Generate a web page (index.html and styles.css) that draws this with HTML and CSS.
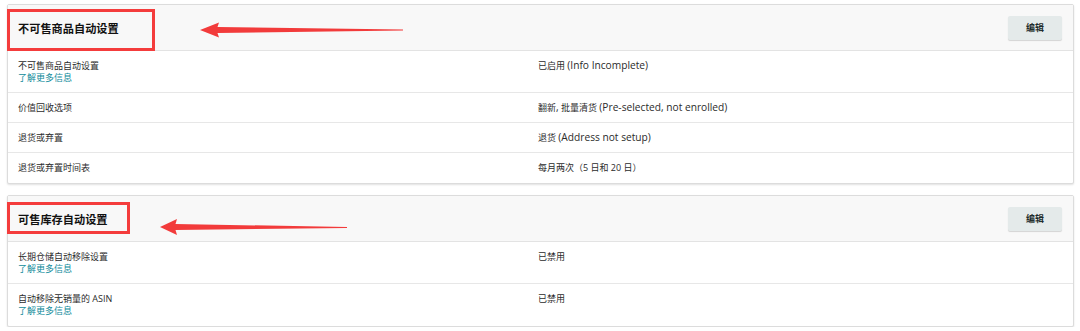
FILE: index.html
```html
<!DOCTYPE html>
<html lang="zh-CN">
<head>
<meta charset="utf-8">
<title>自动设置</title>
<link rel="stylesheet" href="styles.css">
</head>
<body>
<div class="page">
  <section class="card">
    <div class="card-head">
      <h2 class="title">不可售商品自动设置</h2>
      <button class="btn">编辑</button>
      <div class="mark mark-1"></div>
      <svg class="arrow arrow-1" width="210" height="18" viewBox="0 0 210 18"><path d="M2,9 L21,1.5 L19.5,6 L205,8.5 L205,9.5 L19.5,12 L21,16.5 Z" fill="#f23b3b"/></svg>
    </div>
    <div class="row tall">
      <div class="label">不可售商品自动设置<a class="link">了解更多信息</a></div>
      <div class="value">已启用 <span class="en">(Info Incomplete)</span></div>
    </div>
    <div class="row">
      <div class="label">价值回收选项</div>
      <div class="value">翻新<span class="en">,</span> 批量清货 <span class="en">(Pre-selected, not enrolled)</span></div>
    </div>
    <div class="row">
      <div class="label">退货或弃置</div>
      <div class="value">退货 <span class="en">(Address not setup)</span></div>
    </div>
    <div class="row">
      <div class="label">退货或弃置时间表</div>
      <div class="value">每月两次（5 日和 20 日）</div>
    </div>
  </section>

  <section class="card">
    <div class="card-head">
      <h2 class="title">可售库存自动设置</h2>
      <button class="btn">编辑</button>
      <div class="mark mark-2"></div>
      <svg class="arrow arrow-2" width="192" height="18" viewBox="0 0 192 18"><path d="M2,9 L19,1 L17.5,6 L189,9 L189,10 L17.5,12 L19,17 Z" fill="#f23b3b"/></svg>
    </div>
    <div class="row tall">
      <div class="label">长期仓储自动移除设置<a class="link">了解更多信息</a></div>
      <div class="value">已禁用</div>
    </div>
    <div class="row tall">
      <div class="label">自动移除无销量的 ASIN<a class="link">了解更多信息</a></div>
      <div class="value">已禁用</div>
    </div>
  </section>
</div>
</body>
</html>
```

FILE: styles.css
```css
* { box-sizing: border-box; }
html, body { margin: 0; padding: 0; background: #fff; }
body {
  font-family: "Open Sans", "Noto Sans CJK SC", sans-serif;
  color: #222;
  font-size: 9px;
}
.page {
  padding: 4px 6px 0 7px;
  display: flex;
  flex-direction: column;
  gap: 11px;
}
.card {
  border: 1px solid #dcdcdc;
  border-radius: 2px;
  box-shadow: 0 1px 2px rgba(0,0,0,0.12);
  background: #fff;
}
.card-head {
  position: relative;
  height: 46px;
  background: #f8f8f8;
  border-bottom: 1px solid #e3e3e3;
  display: flex;
  align-items: center;
  justify-content: space-between;
  padding: 0 11px 0 10px;
}
.title {
  margin: 0;
  font-size: 11.2px;
  font-weight: 700;
  color: #111;
  font-family: "Noto Sans CJK SC", sans-serif;
  line-height: 14px;
}
.btn {
  width: 54px;
  height: 24px;
  border: none;
  border-radius: 2px;
  background: #e4eaea;
  box-shadow: 0 1px 1px rgba(0,0,0,0.15);
  font-family: "Noto Sans CJK SC", sans-serif;
  font-weight: 700;
  font-size: 9px;
  color: #1d2b2b;
  padding: 0;
}
.mark {
  position: absolute;
  border: 3px solid #f43c3c;
  left: -1px;
}
.mark-1 { top: 4px; width: 148px; height: 42px; }
.mark-2 { top: 6px; width: 123px; height: 32px; }
.arrow { position: absolute; }
.arrow-1 { left: 190px; top: 16px; }
.arrow-2 { left: 150px; top: 22px; }
.row {
  display: grid;
  grid-template-columns: 520px 1fr;
  padding: 9px 10px 8px;
  border-bottom: 1px solid #e7e7e7;
  line-height: 12px;
  height: 30px;
}
.row:last-child { border-bottom: none; }
.row.tall { height: 42px; }
.label, .value {
  font-family: "Open Sans", "Noto Sans CJK SC", sans-serif;
  color: #2b2b2b;
  line-height: 12px;
}
.en { font-size: 10.2px; line-height: 1; }
.label { display: flex; flex-direction: column; }
.link { color: #0e8a9a; }
```
